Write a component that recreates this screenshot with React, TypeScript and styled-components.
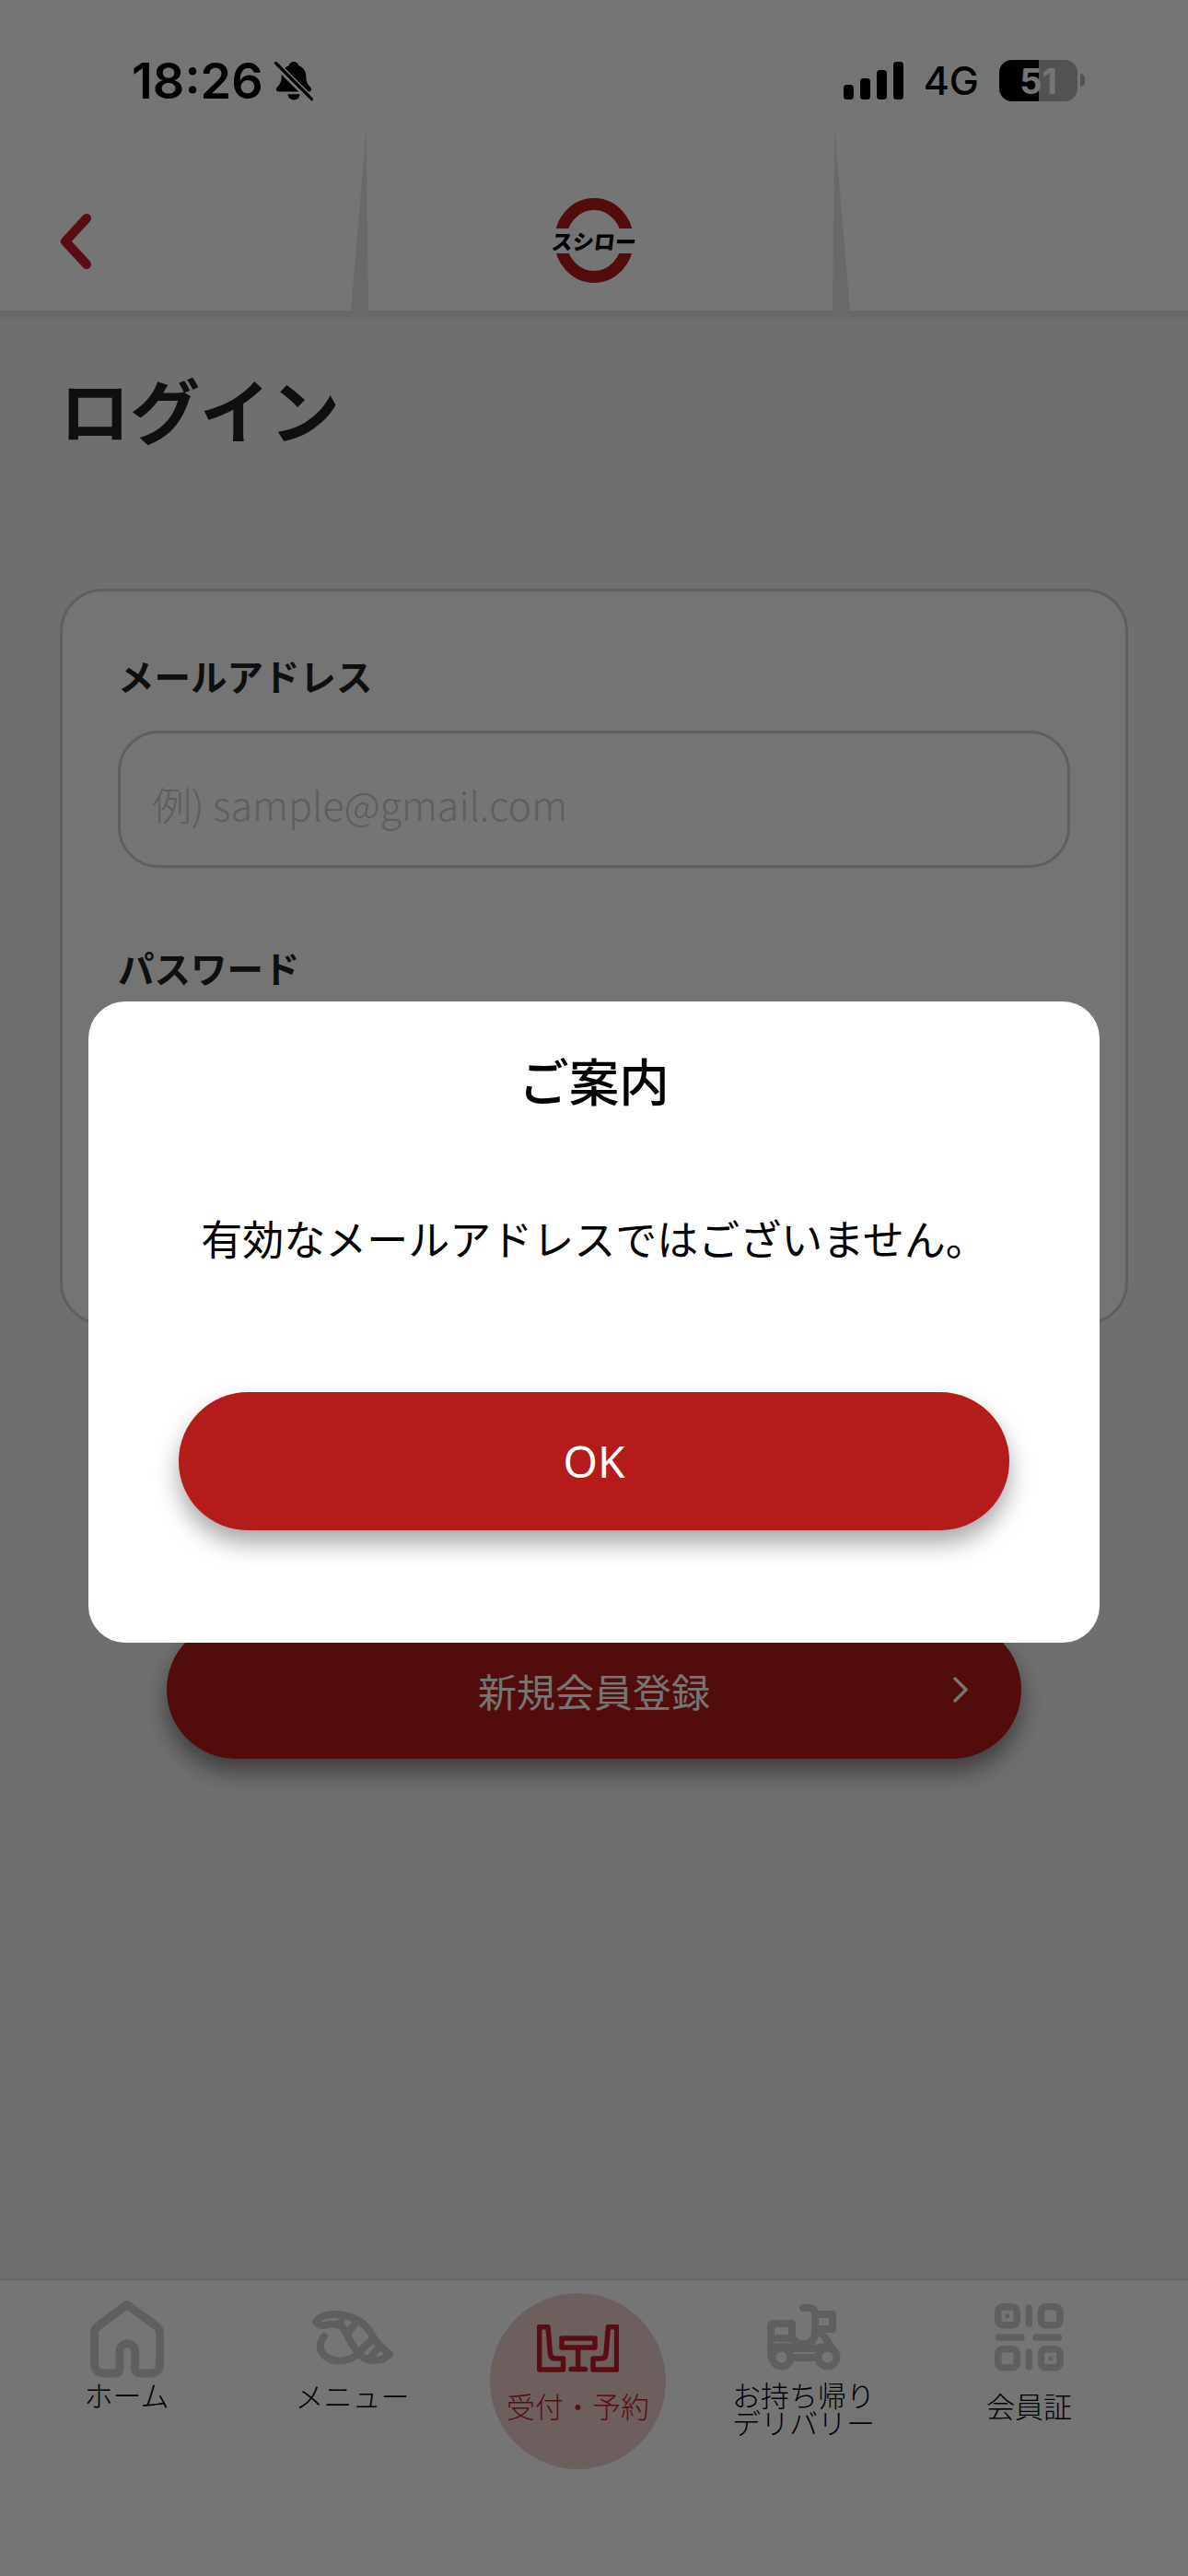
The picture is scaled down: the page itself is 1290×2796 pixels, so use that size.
import React from "react";
import styled, { createGlobalStyle } from "styled-components";

const GlobalStyle = createGlobalStyle`
  html, body {
    margin: 0;
    padding: 0;
    background: #fff;
  }
  * {
    box-sizing: border-box;
  }
  body {
    font-family: "Noto Sans CJK JP", "Noto Sans", sans-serif;
  }
`;

const Page = styled.div`
  position: relative;
  width: 1290px;
  height: 2796px;
  overflow: hidden;
  display: flex;
  flex-direction: column;
  background: #f2f2f2;
  color: #000;
`;

const Header = styled.header`
  background: #fff;
  border-bottom: 8px solid #e4e4e4;
`;

const StatusBar = styled.div`
  height: 140px;
  padding: 35px 120px 0 143px;
  display: flex;
  align-items: center;
  justify-content: space-between;
`;

const StatusGroup = styled.div`
  display: flex;
  align-items: center;
`;

const Time = styled.span`
  font-family: Inter, "Liberation Sans", sans-serif;
  font-size: 54px;
  font-weight: 600;
  line-height: 1;
  margin-right: 12px;
`;

const Signal = styled.div`
  display: flex;
  align-items: flex-end;
  gap: 7px;
  height: 41px;
  margin-right: 22px;
`;

const SignalBar = styled.i<{ $h: number }>`
  display: block;
  width: 11px;
  height: ${(p) => p.$h}px;
  border-radius: 3.5px;
  background: #000;
`;

const Network = styled.span`
  font-family: Inter, "Liberation Sans", sans-serif;
  font-size: 43px;
  font-weight: 500;
  line-height: 1;
  margin-right: 22px;
`;

const Battery = styled.div`
  position: relative;
  width: 85px;
  height: 45px;
  border-radius: 14px;
  display: flex;
  align-items: center;
  justify-content: center;
  background: linear-gradient(90deg, #000 51%, #b4b4b4 51%);
  color: #fff;
  font-family: Inter, "Liberation Sans", sans-serif;
  font-size: 38px;
  font-weight: 700;
  line-height: 1;
  &::after {
    content: "";
    position: absolute;
    left: 88px;
    top: 15px;
    width: 5px;
    height: 14px;
    border-radius: 0 7px 7px 0;
    background: #b4b4b4;
  }
`;

const HeaderBar = styled.div`
  height: 197px;
  display: flex;
`;

const BackCell = styled.div`
  width: 381px;
  padding: 92px 0 0 64px;
`;

const Spike = styled.div<{ $side: "left" | "right" }>`
  width: 19px;
  height: 197px;
  background: #e4e4e4;
  clip-path: ${(p) =>
    p.$side === "left"
      ? "polygon(88% 0, 100% 100%, 0 100%)"
      : "polygon(12% 0, 100% 100%, 0 100%)"};
`;

const LogoCell = styled.div`
  flex: 0 0 504px;
  display: flex;
  justify-content: center;
  padding: 75px 14px 0 0;
`;

const Logo = styled.div`
  position: relative;
  width: 92px;
  height: 92px;
  display: flex;
  align-items: center;
  justify-content: center;
`;

const LogoRing = styled.svg`
  position: absolute;
  inset: 0;
`;

const LogoText = styled.span`
  position: relative;
  height: 27px;
  padding: 0 1px;
  display: flex;
  align-items: center;
  background: #fff;
  font-size: 23px;
  font-weight: 900;
  line-height: 1;
  white-space: nowrap;
  transform: skewX(-6deg);
`;

const Main = styled.main`
  flex: 1;
  padding: 60px 65px 0;
  display: flex;
  flex-direction: column;
`;

const Title = styled.h1`
  margin: 0;
  font-size: 76px;
  font-weight: 700;
  line-height: 1;
  color: #222;
`;

const Card = styled.section`
  margin-top: 158px;
  height: 799px;
  padding: 71px 60px 0;
  background: #fcfcfc;
  border: 3px solid #cfcfcf;
  border-radius: 46px;
`;

const FieldLabel = styled.div<{ $first?: boolean }>`
  margin-top: ${(p) => (p.$first ? 0 : 88)}px;
  font-size: 39.5px;
  font-weight: 700;
  line-height: 1;
  color: #222;
`;

const TextField = styled.input`
  display: block;
  width: 100%;
  height: 149px;
  margin-top: 40px;
  padding: 10px 34px 0;
  border: 3px solid #cfcfcf;
  border-radius: 44px;
  background: #fff;
  font-family: inherit;
  font-size: 43px;
  font-weight: 300;
  outline: none;
  &::placeholder {
    color: #cdcdcd;
    opacity: 1;
  }
`;

const RegisterButton = styled.button`
  position: relative;
  align-self: center;
  width: 928px;
  height: 150px;
  margin-top: 321px;
  border: 0;
  border-radius: 75px;
  background: #b31b1b;
  color: #fff;
  font-family: inherit;
  font-size: 42px;
  font-weight: 400;
  box-shadow: 0 14px 26px rgba(0, 0, 0, 0.45);
`;

const RegisterArrow = styled.svg`
  position: absolute;
  right: 56px;
  top: 61px;
`;

const BottomNav = styled.nav`
  height: 323px;
  padding: 0 15px;
  display: grid;
  grid-template-columns: repeat(5, 245px);
  align-items: start;
  background: #fff;
  border-top: 2px solid #dcdcdc;
`;

const Tab = styled.div<{ $top: number; $active?: boolean }>`
  position: relative;
  isolation: isolate;
  display: flex;
  flex-direction: column;
  align-items: center;
  padding-top: ${(p) => p.$top}px;
  color: ${(p) => (p.$active ? "#c31c25" : "#000")};
  ${(p) =>
    p.$active &&
    `
    &::before {
      content: "";
      position: absolute;
      z-index: -1;
      top: 14px;
      left: 27px;
      width: 191px;
      height: 191px;
      border-radius: 50%;
      background: #f0cfcf;
    }
  `}
`;

const TabLabel = styled.span<{ $gap: number }>`
  margin-top: ${(p) => p.$gap}px;
  font-size: 31px;
  font-weight: 300;
  line-height: 30px;
  text-align: center;
  white-space: nowrap;
`;

const Overlay = styled.div`
  position: absolute;
  inset: 0;
  z-index: 1;
  padding-top: 1087px;
  display: flex;
  justify-content: center;
  align-items: flex-start;
  background: rgba(0, 0, 0, 0.54);
`;

const Dialog = styled.div`
  width: 1098px;
  height: 696px;
  padding-top: 58px;
  display: flex;
  flex-direction: column;
  align-items: center;
  background: #fff;
  border-radius: 40px;
`;

const DialogTitle = styled.h2`
  margin: 0;
  font-size: 54.5px;
  font-weight: 500;
  line-height: 1;
`;

const DialogMessage = styled.p`
  margin: 121px 0 0;
  font-size: 45px;
  font-weight: 400;
  line-height: 1;
`;

const OkButton = styled.button`
  width: 902px;
  height: 150px;
  margin-top: 145px;
  border: 0;
  border-radius: 75px;
  background: #b41c1c;
  color: #fff;
  font-family: "Noto Sans", sans-serif;
  font-size: 48px;
  font-weight: 400;
  box-shadow: 0 14px 26px rgba(0, 0, 0, 0.35);
`;

const ICON = "#cfcfcf";
const ACTIVE = "#c31c25";

function BellOff() {
  return (
    <svg width="42" height="46" viewBox="0 0 44 46">
      <path
        d="M22 1c3 0 5 2 5.500 4.500 6 2 8.500 7 8.500 12.500 0 6 2 9 5 12 2 2 1 5-2 5H5c-3 0-4-3-2-5 3-3 5-6 5-12 0-5.500 2.500-10.500 8.500-12.500C17 3 19 1 22 1z"
        fill="#000"
      />
      <path d="M15 38h14c-.5 4-3.500 6.500-7 6.500S15.500 42 15 38z" fill="#000" />
      <path d="M1 3l41 41" stroke="#fff" strokeWidth="8" />
      <path d="M1.500 2.500l41 41" stroke="#000" strokeWidth="3.500" strokeLinecap="round" />
    </svg>
  );
}

function HomeIcon() {
  return (
    <svg width="80" height="84" viewBox="0 0 80 84" fill="none" stroke={ICON} strokeWidth="9" strokeLinejoin="round">
      <path d="M40 4.500 8 28Q4.500 31 4.500 35V68Q4.500 79 15 79H27Q32 79 32 74V55A8.350 8.350 0 0 1 48.700 55V74Q48.700 79 54 79H65Q75.500 79 75.500 68V35Q75.500 31 72 28Z" />
    </svg>
  );
}

function SushiIcon() {
  return (
    <svg width="90" height="60" viewBox="0 0 90 60" fill="none" stroke={ICON} strokeWidth="8" strokeLinecap="round" strokeLinejoin="round">
      <path d="M5 13C9 7 17 5 25 5 38 5 55 10 64 24 68 32 72 38 85 48 80 54 72 56 62 54 56 53 51 47 44 37 40 30 38 24 35 20 31 16 25 15 20 16 14 17 8 19 5 13Z" />
      <path d="M14 29C8 36 8 45 16 51 24 57 38 57 48 50" />
      <path d="M35 7 30 17M50 12 40 25M67 32 50 47M72 42 64 52" />
    </svg>
  );
}

function TableIcon() {
  return (
    <svg width="89" height="52" viewBox="0 0 89 52" fill="none" stroke={ACTIVE} strokeWidth="5.500" strokeLinejoin="round" strokeLinecap="round">
      <path d="M2.700 2.700H12L14.500 32Q15 37 20 37H28.500V49H2.700Z" />
      <path d="M86.700 2.700H77.400L75 32Q74.500 37 69.500 37H61V49H86.700Z" />
      <path d="M27 15H63V25H27ZM44.700 25V48M37 48.500H52.500" />
    </svg>
  );
}

function ScooterIcon() {
  return (
    <svg width="80" height="72" viewBox="0 0 80 72" fill="none" stroke={ICON} strokeWidth="8" strokeLinejoin="round" strokeLinecap="round">
      <path d="M39 4H46Q52 4 52 10V30Q52 43 39 43 27 43 27 31V21H7Q4 21 4 25V56" />
      <path d="M52 11H71V27H56M57 28 75 54" />
      <path d="M4 37H27M4 56Q5 46 15 46 25 46 30 48H52Q58 46 65 46" />
      <circle cx="15.500" cy="57.500" r="10" />
      <circle cx="65.500" cy="57.500" r="10" />
      <path d="M25 58H55" />
    </svg>
  );
}

function QrIcon() {
  return (
    <svg width="75" height="74" viewBox="0 0 75 74" fill="none" stroke={ICON} strokeWidth="7.500" strokeLinecap="round" strokeLinejoin="round">
      <rect x="3.750" y="3.750" width="20.500" height="20" rx="5" />
      <rect x="50.500" y="3.750" width="20.500" height="20" rx="5" />
      <rect x="3.750" y="49.750" width="20.500" height="20" rx="5" />
      <rect x="50.500" y="49.750" width="20.500" height="20" rx="5" />
      <path d="M37.200 5V22M37.200 53V69M4.500 37H29M45 37H69.500" />
      <rect x="11.500" y="11.500" width="4.500" height="4.500" fill={ICON} stroke="none" />
      <rect x="58.500" y="57.500" width="4.500" height="4.500" fill={ICON} stroke="none" />
    </svg>
  );
}

export default function App() {
  return (
    <>
      <GlobalStyle />
      <Page>
        <Header>
          <StatusBar>
            <StatusGroup>
              <Time>18:26</Time>
              <BellOff />
            </StatusGroup>
            <StatusGroup>
              <Signal>
                {[16, 23, 32, 41].map((h) => (
                  <SignalBar key={h} $h={h} />
                ))}
              </Signal>
              <Network>4G</Network>
              <Battery>51</Battery>
            </StatusGroup>
          </StatusBar>
          <HeaderBar>
            <BackCell>
              <svg width="36" height="60" viewBox="0 0 36 60" fill="none">
                <path d="M30 5 7 30l23 25" stroke={ACTIVE} strokeWidth="10" strokeLinecap="round" strokeLinejoin="round" />
              </svg>
            </BackCell>
            <Spike $side="left" />
            <LogoCell>
              <Logo>
                <LogoRing width="92" height="92" viewBox="0 0 92 92" fill="none">
                  <ellipse cx="46" cy="46" rx="36.500" ry="39.500" stroke="#b31b1b" strokeWidth="13" />
                </LogoRing>
                <LogoText>スシロー</LogoText>
              </Logo>
            </LogoCell>
            <Spike $side="right" />
          </HeaderBar>
        </Header>
        <Main>
          <Title>ログイン</Title>
          <Card>
            <FieldLabel $first>メールアドレス</FieldLabel>
            <TextField placeholder="例) sample@gmail.com" readOnly />
            <FieldLabel>パスワード</FieldLabel>
            <TextField type="password" readOnly />
          </Card>
          <RegisterButton>
            新規会員登録
            <RegisterArrow width="20" height="28" viewBox="0 0 20 28" fill="none">
              <path d="M4 2l12 12L4 26" stroke="#fff" strokeWidth="3.500" strokeLinecap="round" strokeLinejoin="round" />
            </RegisterArrow>
          </RegisterButton>
        </Main>
        <BottomNav>
          <Tab $top={22}>
            <HomeIcon />
            <TabLabel $gap={3}>ホーム</TabLabel>
          </Tab>
          <Tab $top={32}>
            <SushiIcon />
            <TabLabel $gap={18}>メニュー</TabLabel>
          </Tab>
          <Tab $top={48} $active>
            <TableIcon />
            <TabLabel $gap={21}>受付・予約</TabLabel>
          </Tab>
          <Tab $top={26}>
            <ScooterIcon />
            <TabLabel $gap={11}>
              お持ち帰り
              <br />
              デリバリー
            </TabLabel>
          </Tab>
          <Tab $top={25}>
            <QrIcon />
            <TabLabel $gap={22}>会員証</TabLabel>
          </Tab>
        </BottomNav>
        <Overlay>
          <Dialog>
            <DialogTitle>ご案内</DialogTitle>
            <DialogMessage>有効なメールアドレスではございません。</DialogMessage>
            <OkButton>OK</OkButton>
          </Dialog>
        </Overlay>
      </Page>
    </>
  );
}
